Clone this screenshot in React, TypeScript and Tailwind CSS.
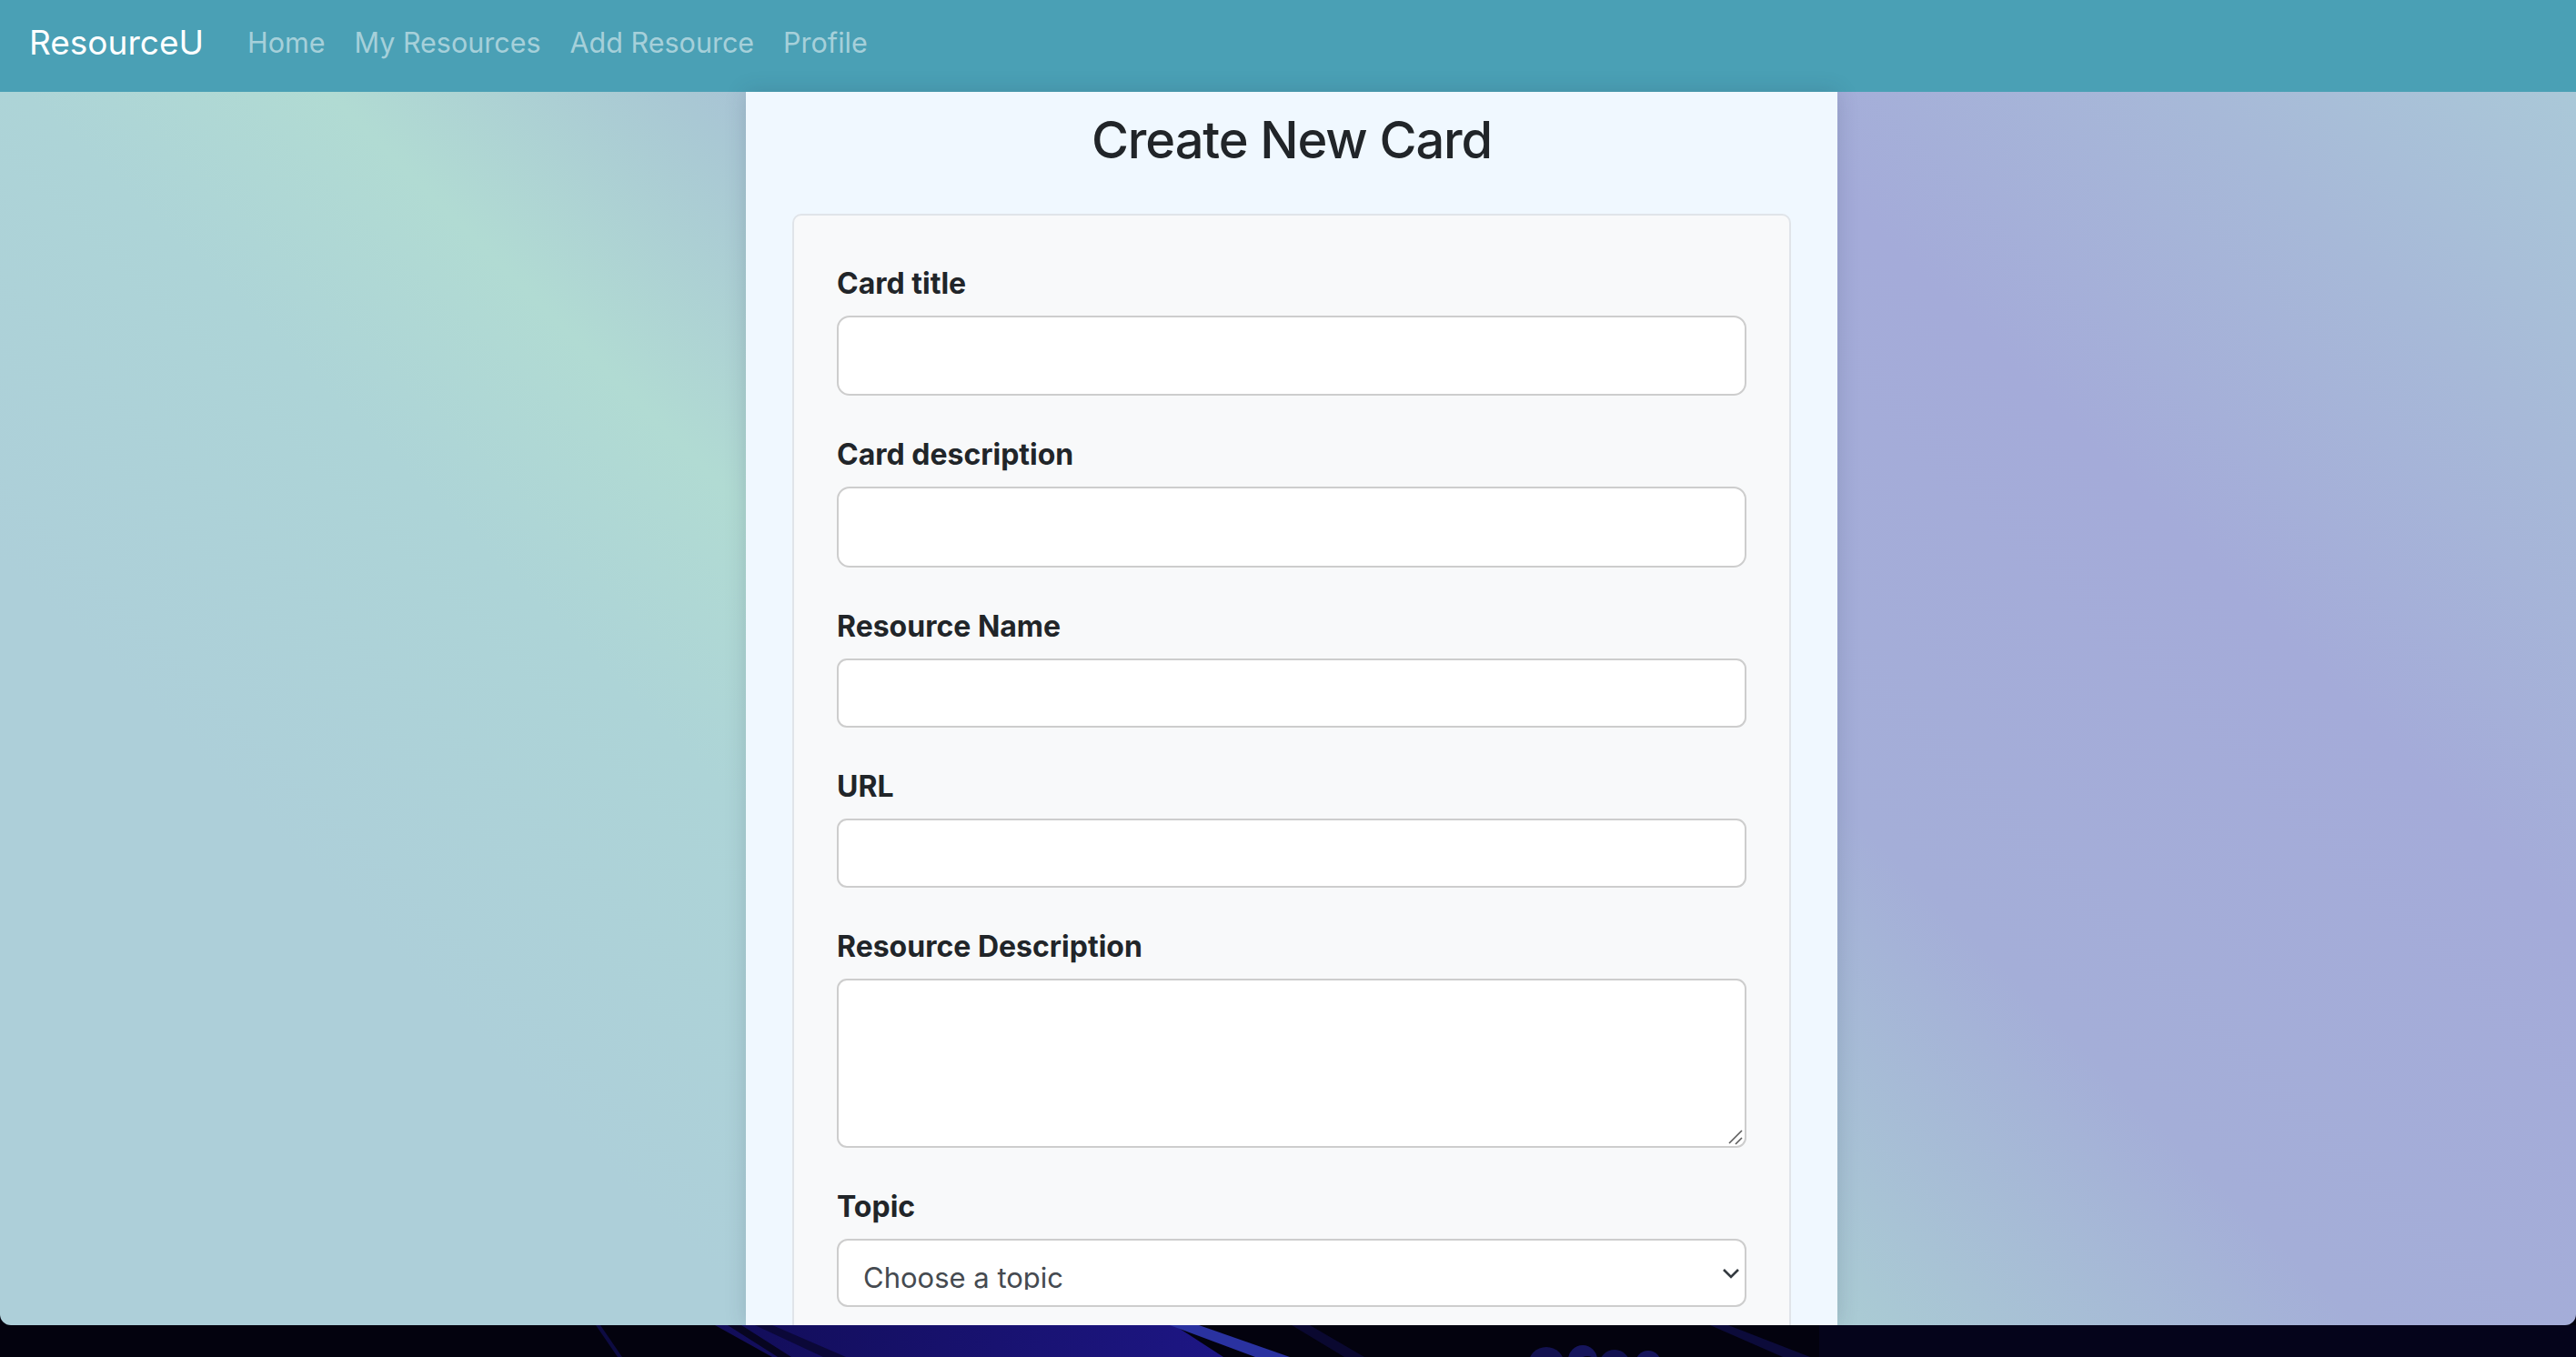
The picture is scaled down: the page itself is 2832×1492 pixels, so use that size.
const links = ['Home', 'My Resources', 'Add Resource', 'Profile']

function Label({ children }: { children: string }) {
  return (
    <label className="mb-[11px] block pt-[3px] text-[32px] font-bold leading-[48px] text-[#212529]">{children}</label>
  )
}

function Field({ label, height, radius }: { label: string; height: string; radius: string }) {
  return (
    <div className="mb-[38px]">
      <Label>{label}</Label>
      <div className={`w-full border-2 border-[#cdcdcd] bg-white ${height} ${radius}`} />
    </div>
  )
}

function Wallpaper() {
  return (
    <svg width="2832" height="35" viewBox="0 0 2832 35" className="block">
      <defs>
        <linearGradient id="wp" x1="0" y1="0" x2="1" y2="0">
          <stop offset="0" stopColor="#120d58" />
          <stop offset="1" stopColor="#1d1684" />
        </linearGradient>
      </defs>
      <rect width="2832" height="35" fill="#03020e" />
      <rect x="2000" width="832" height="35" fill="#05041b" />
      <polygon points="655,0 660,0 684,35 679,35" fill="#0d0b42" />
      <polygon points="786,0 1291,0 1345,35 849,35" fill="url(#wp)" />
      <polygon points="800,0 815,0 870,35 855,35" fill="#070520" />
      <polygon points="830,0 849,0 930,35 905,35" fill="#0b0838" />
      <polygon points="1286,0 1318,0 1418,35 1380,35" fill="#2a32a0" />
      <polygon points="1420,0 1440,0 1500,35 1478,35" fill="#0a0830" />
      <circle cx="1700" cy="44" r="20" fill="#131250" />
      <circle cx="1740" cy="38" r="16" fill="#16155c" />
      <circle cx="1775" cy="44" r="17" fill="#121150" />
      <circle cx="1812" cy="42" r="14" fill="#16155c" />
      <circle cx="1745" cy="46" r="12" fill="#05041a" />
      <circle cx="1790" cy="50" r="12" fill="#05041a" />
      <polygon points="1880,0 1900,0 1990,35 1960,35" fill="#0c0b3a" />
    </svg>
  )
}

export default function App() {
  return (
    <div className="flex h-[1492px] w-[2832px] flex-col overflow-hidden bg-[#03020e] font-['Inter','Noto_Sans',sans-serif]">
      <div className="flex h-[1457px] shrink-0 flex-col overflow-hidden rounded-b-[12px]">
        {/* Navbar */}
        <nav className="flex h-[101px] shrink-0 items-center bg-[#4aa0b5] pb-[7px] pl-[32px]">
          <span className="mr-[32px] text-[37px] text-white">ResourceU</span>
          {links.map((l) => (
            <span key={l} className="px-[16px] text-[30.5px] text-[#a6d0da]">
              {l}
            </span>
          ))}
        </nav>

        {/* Page */}
        <main className="flex min-h-0 flex-1 justify-center bg-[linear-gradient(45deg,#adcfd9_0%,#adcfd9_20%,#add4d7_33%,#b1dbd3_41%,#a9c8d4_50%,#a4aed8_62%,#a4abd9_78%,#a7b9d8_90%,#aac8d8_100%)] pl-[8px]">
          <div className="w-[1200px] shrink-0 bg-[#f0f8ff] pt-[19px] shadow-[0_0_22px_rgba(40,50,80,0.18)]">
            <h2 className="mb-[47px] text-center text-[56px] font-medium leading-[68px] tracking-[-0.02em] text-[#212529]">
              Create New Card
            </h2>

            <div className="mx-[51px] rounded-[10px] border-2 border-[#e0e4e9] bg-[#f8f9fa] px-[47px] pt-[48px]">
              <Field label="Card title" height="h-[88px]" radius="rounded-[14px]" />
              <Field label="Card description" height="h-[89px]" radius="rounded-[14px]" />
              <Field label="Resource Name" height="h-[76px]" radius="rounded-[11px]" />
              <Field label="URL" height="h-[76px]" radius="rounded-[11px]" />

              <div className="mb-[38px]">
                <Label>Resource Description</Label>
                <div className="relative h-[186px] w-full rounded-[11px] border-2 border-[#cdcdcd] bg-white">
                  <svg width="20" height="20" viewBox="0 0 20 20" className="absolute bottom-0 right-0">
                    <line x1="3" y1="17" x2="17" y2="3" stroke="#5a5a5a" strokeWidth="1.6" />
                    <line x1="10" y1="18" x2="17" y2="11" stroke="#5a5a5a" strokeWidth="1.6" />
                  </svg>
                </div>
              </div>

              <div className="mb-[38px]">
                <Label>Topic</Label>
                <div className="flex h-[75px] w-full rounded-[12px] border-2 border-[#cdcdcd] bg-white pl-[27px] pr-[5px]">
                  <div className="mt-[25px] h-[29px] flex-1 overflow-hidden text-[31px] leading-[32px] text-[#454a50]">
                    Choose a topic
                  </div>
                  <svg width="20" height="12" viewBox="0 0 20 12" className="self-center">
                    <polyline points="2,2 10,10 18,2" fill="none" stroke="#343a40" strokeWidth="2.6" />
                  </svg>
                </div>
              </div>
            </div>
          </div>
        </main>
      </div>
      <Wallpaper />
    </div>
  )
}
